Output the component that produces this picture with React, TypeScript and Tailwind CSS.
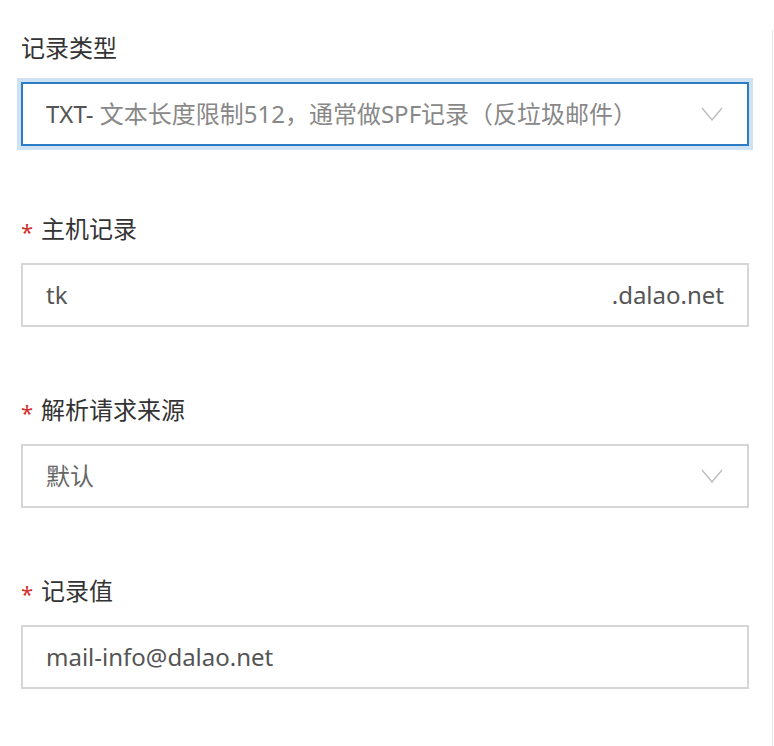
import React from 'react';

const font = { fontFamily: '"Noto Sans", "Noto Sans CJK SC", sans-serif' };

function Chevron() {
  return (
    <svg className="w-[22px] h-[14px] shrink-0" viewBox="0 0 22 14" fill="none" stroke="#bdbdbd" strokeWidth={1.4}>
      <path d="M1 1 L11 13 L21 1" />
    </svg>
  );
}

function Label({ text, required }: { text: string; required?: boolean }) {
  return (
    <div className="flex items-center h-8 leading-8 mb-[18px] text-[24px] text-[#333]">
      {required && <span className="text-[#d0312d] w-[20px] text-[22px] leading-none pt-[4px]">*</span>}
      <span>{text}</span>
    </div>
  );
}

export default function App() {
  return (
    <div className="flex h-[746px] bg-white overflow-hidden" style={font}>
      <div className="w-[772px] pl-[21px] pt-8">
        {/* 记录类型 */}
        <div className="mb-[67px]">
          <Label text="记录类型" />
          <div className="w-[728px] h-16 border-2 border-[#2b7dc6] shadow-[0_0_0_4px_#cfe2f3] flex items-center justify-between pl-[23px] pr-[24px] text-[24px]">
            <span>
              <span className="text-[#555]">TXT- </span>
              <span className="text-[#888]">文本长度限制512，通常做SPF记录（反垃圾邮件）</span>
            </span>
            <Chevron />
          </div>
        </div>

        {/* 主机记录 */}
        <div className="mb-[67px]">
          <Label text="主机记录" required />
          <div className="w-[728px] h-16 border-2 border-[#d6d6d6] flex items-center justify-between pl-[23px] pr-[23px] text-[24px] text-[#555]">
            <span>tk</span>
            <span>.dalao.net</span>
          </div>
        </div>

        {/* 解析请求来源 */}
        <div className="mb-[67px]">
          <Label text="解析请求来源" required />
          <div className="w-[728px] h-16 border-2 border-[#d6d6d6] flex items-center justify-between pl-[23px] pr-[24px] text-[24px] text-[#666]">
            <span>默认</span>
            <Chevron />
          </div>
        </div>

        {/* 记录值 */}
        <div>
          <Label text="记录值" required />
          <div className="w-[728px] h-16 border-2 border-[#d6d6d6] flex items-center pl-[23px] text-[24px] text-[#555]">
            <span>mail-info@dalao.net</span>
          </div>
        </div>
      </div>
      <div className="w-px bg-[#e6e6e6] mt-[30px]" />
    </div>
  );
}
